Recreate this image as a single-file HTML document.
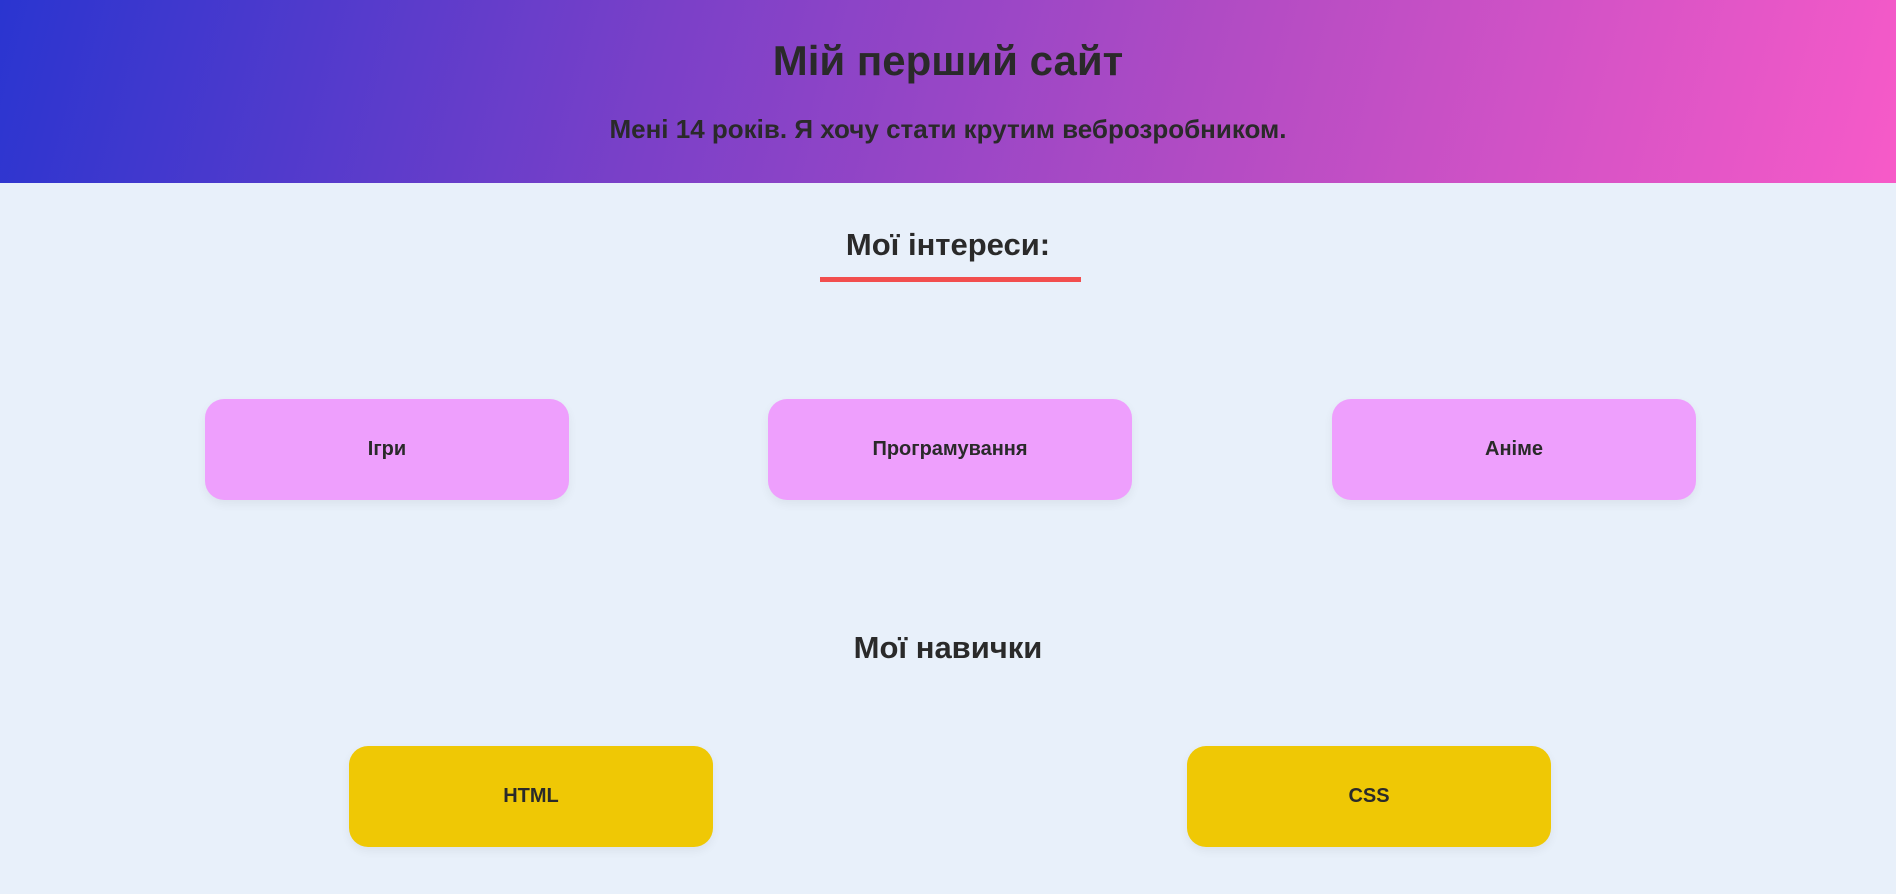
<!DOCTYPE html>
<html><head><meta charset="utf-8"><style>
*{margin:0;padding:0;box-sizing:border-box}
html,body{width:1896px;height:894px;overflow:hidden}
body{background:#e8f0fa;font-family:"Liberation Sans",Arial,sans-serif;color:#2a2a2a;position:relative}
header{position:absolute;left:0;top:0;width:1896px;height:183px;background:linear-gradient(105deg,#2a35d0 0%,#7b40c8 35%,#b44cc4 65%,#f75ac8 100%)}
.c{position:absolute;left:0;width:1896px;text-align:center;font-weight:bold;white-space:nowrap}
.card{position:absolute;border-radius:19px;display:flex;align-items:center;justify-content:center;font-weight:bold;font-size:20px;box-shadow:0 4px 10px rgba(0,0,0,0.06)}
.p{background:#ee9ffd;top:399px;width:364px;height:101px}
.y{background:#efc805;top:746px;width:364px;height:101px}
</style></head><body>
<header></header>
<div class="c" style="top:36px;font-size:42px;line-height:50px">Мій перший сайт</div>
<div class="c" style="top:113px;font-size:26px;line-height:32px">Мені 14 років. Я хочу стати крутим веброзробником.</div>
<div class="c" style="top:227px;font-size:31px;line-height:36px">Мої інтереси:</div>
<div style="position:absolute;left:820px;top:277px;width:261px;height:5px;background:#f24e4e"></div>
<div class="card p" style="left:205px">Ігри</div>
<div class="card p" style="left:768px">Програмування</div>
<div class="card p" style="left:1332px">Аніме</div>
<div class="c" style="top:630px;font-size:31px;line-height:36px">Мої навички</div>
<div class="card y" style="left:349px">HTML</div>
<div class="card y" style="left:1187px">CSS</div>
</body></html>
